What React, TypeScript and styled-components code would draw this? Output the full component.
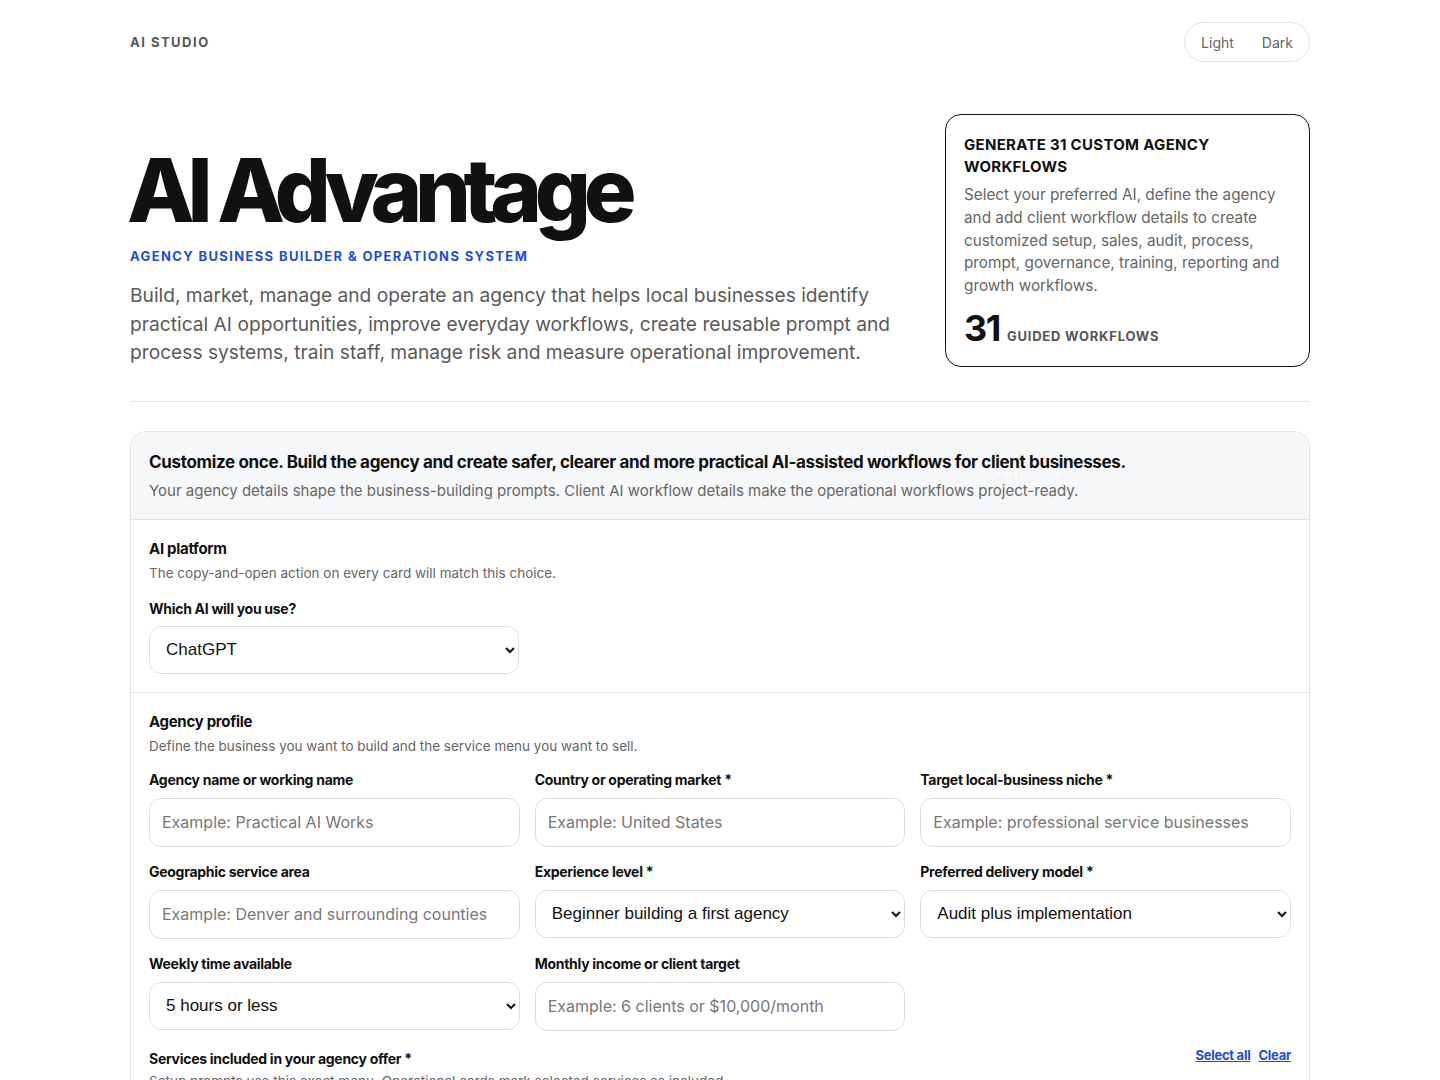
import React from "react";
import styled, { createGlobalStyle } from "styled-components";

const Global = createGlobalStyle`
  * { box-sizing: border-box; }
  html, body { margin: 0; padding: 0; background: #ffffff; }
  body { font-family: Inter, "Noto Sans", sans-serif; color: #111111; -webkit-font-smoothing: antialiased; }
`;

const Page = styled.div`
  width: 1180px;
  margin: 0 auto;
`;

const TopBar = styled.header`
  display: flex;
  align-items: center;
  justify-content: space-between;
  height: 84px;
`;

const Brand = styled.div`
  font-size: 13px;
  font-weight: 700;
  letter-spacing: 0.115em;
  color: #555;
`;

const Toggle = styled.div`
  display: flex;
  align-items: center;
  height: 40px;
  padding: 0 2px;
  border: 1px solid #e2e2e2;
  border-radius: 20px;
`;

const ToggleBtn = styled.button`
  border: 0;
  background: transparent;
  font-family: Inter, sans-serif;
  font-size: 14px;
  color: #666;
  padding: 0 14px;
  height: 32px;
  border-radius: 16px;
`;

const Hero = styled.section`
  display: grid;
  grid-template-columns: 1fr 365px;
  gap: 40px;
  align-items: start;
  padding-top: 30px;
  padding-bottom: 34px;
  border-bottom: 1px solid #e3e3e3;
`;

const HeroText = styled.div`
  padding-top: 28px;
`;

const Title = styled.h1`
  margin: 0 0 0 -3px;
  font-size: 88px;
  line-height: 96px;
  font-weight: 800;
  letter-spacing: -0.083em;
  color: #111;
`;

const Kicker = styled.div`
  margin-top: 10px;
  font-size: 13px;
  font-weight: 700;
  letter-spacing: 0.105em;
  color: #1d4ed8;
`;

const Lead = styled.p`
  margin: 17px 0 0;
  max-width: 790px;
  font-size: 19.2px;
  line-height: 28.5px;
  color: #5a5a5a;
`;

const StatCard = styled.aside`
  border: 1px solid #111;
  border-radius: 16px;
  padding: 19px 18px 18px;
`;

const StatTitle = styled.h2`
  margin: 0;
  font-size: 15px;
  line-height: 22px;
  font-weight: 700;
  letter-spacing: 0.02em;
  color: #111;
`;

const StatBody = styled.p`
  margin: 6px 0 0;
  font-size: 15.3px;
  line-height: 22.8px;
  color: #666;
`;

const StatRow = styled.div`
  display: flex;
  align-items: baseline;
  gap: 7px;
  margin-top: 10px;
`;

const StatNum = styled.span`
  font-size: 36px;
  font-weight: 700;
  letter-spacing: -0.04em;
  color: #111;
  line-height: 40px;
`;

const StatUnit = styled.span`
  font-size: 13px;
  font-weight: 700;
  letter-spacing: 0.06em;
  color: #555;
`;

const Panel = styled.section`
  margin-top: 29px;
  border: 1px solid #e3e3e3;
  border-radius: 16px;
  overflow: hidden;
`;

const PanelHead = styled.div`
  background: #f6f7f9;
  padding: 18px 18px 18px;
  border-bottom: 1px solid #e3e3e3;
`;

const PanelTitle = styled.h3`
  margin: 0;
  font-size: 17px;
  line-height: 24px;
  font-weight: 700;
  letter-spacing: -0.02em;
  color: #111;
`;

const PanelSub = styled.p`
  margin: 7px 0 0;
  font-size: 15px;
  line-height: 20px;
  color: #666;
`;

const Section = styled.div<{ $last?: boolean }>`
  padding: 19px 18px 18px;
  border-bottom: ${(p) => (p.$last ? "none" : "1px solid #e3e3e3")};
`;

const SectionTitle = styled.h4`
  margin: 0;
  font-size: 15px;
  line-height: 20px;
  font-weight: 700;
  letter-spacing: -0.02em;
  color: #111;
`;

const SectionDesc = styled.p`
  margin: 6px 0 0;
  font-size: 13.5px;
  line-height: 16px;
  color: #666;
`;

const Grid = styled.div`
  display: grid;
  grid-template-columns: repeat(3, 1fr);
  column-gap: 15px;
  row-gap: 16px;
  margin-top: 17px;
`;

const Field = styled.label`
  display: flex;
  flex-direction: column;
  gap: 10px;
`;

const SingleField = styled(Field)`
  width: 370px;
  margin-top: 19px;
  gap: 9px;
`;

const Label = styled.span`
  font-size: 14px;
  line-height: 17px;
  font-weight: 700;
  letter-spacing: -0.02em;
  color: #111;
`;

const Input = styled.input`
  height: 49px;
  width: 100%;
  border: 1px solid #dedede;
  border-radius: 12px;
  padding: 0 12px;
  font-family: Inter, sans-serif;
  font-size: 16px;
  color: #111;
  background: #fff;
  &::placeholder { color: #777; }
`;

const Select = styled.select`
  height: 48px;
  width: 100%;
  border: 1px solid #dedede;
  border-radius: 12px;
  padding: 0 12px;
  font-family: "Liberation Sans", Arial, sans-serif;
  font-size: 17px;
  color: #111;
  background: #fff;
`;

const ServicesRow = styled.div`
  display: flex;
  align-items: flex-start;
  justify-content: space-between;
  margin-top: 19px;
`;

const Links = styled.div`
  display: flex;
  gap: 8px;
  margin-top: -3px;
`;

const LinkBtn = styled.a`
  font-size: 13px;
  line-height: 16px;
  font-weight: 700;
  letter-spacing: -0.02em;
  color: #1d4ed8;
  text-decoration: underline;
  cursor: pointer;
`;

const ServicesDesc = styled(SectionDesc)`
  margin-top: 6px;
`;

export default function App() {
  return (
    <>
      <Global />
      <Page>
        <TopBar>
          <Brand>AI STUDIO</Brand>
          <Toggle>
            <ToggleBtn>Light</ToggleBtn>
            <ToggleBtn>Dark</ToggleBtn>
          </Toggle>
        </TopBar>

        <Hero>
          <HeroText>
            <Title>AI Advantage</Title>
            <Kicker>AGENCY BUSINESS BUILDER &amp; OPERATIONS SYSTEM</Kicker>
            <Lead>
              Build, market, manage and operate an agency that helps local businesses identify practical AI
              opportunities, improve everyday workflows, create reusable prompt and process systems, train staff,
              manage risk and measure operational improvement.
            </Lead>
          </HeroText>
          <StatCard>
            <StatTitle>GENERATE 31 CUSTOM AGENCY WORKFLOWS</StatTitle>
            <StatBody>
              Select your preferred AI, define the agency and add client workflow details to create customized
              setup, sales, audit, process, prompt, governance, training, reporting and growth workflows.
            </StatBody>
            <StatRow>
              <StatNum>31</StatNum>
              <StatUnit>GUIDED WORKFLOWS</StatUnit>
            </StatRow>
          </StatCard>
        </Hero>

        <Panel>
          <PanelHead>
            <PanelTitle>
              Customize once. Build the agency and create safer, clearer and more practical AI-assisted workflows
              for client businesses.
            </PanelTitle>
            <PanelSub>
              Your agency details shape the business-building prompts. Client AI workflow details make the
              operational workflows project-ready.
            </PanelSub>
          </PanelHead>

          <Section>
            <SectionTitle>AI platform</SectionTitle>
            <SectionDesc>The copy-and-open action on every card will match this choice.</SectionDesc>
            <SingleField>
              <Label>Which AI will you use?</Label>
              <Select defaultValue="ChatGPT">
                <option>ChatGPT</option>
                <option>Claude</option>
                <option>Gemini</option>
              </Select>
            </SingleField>
          </Section>

          <Section $last>
            <SectionTitle>Agency profile</SectionTitle>
            <SectionDesc>Define the business you want to build and the service menu you want to sell.</SectionDesc>
            <Grid>
              <Field>
                <Label>Agency name or working name</Label>
                <Input placeholder="Example: Practical AI Works" />
              </Field>
              <Field>
                <Label>Country or operating market *</Label>
                <Input placeholder="Example: United States" />
              </Field>
              <Field>
                <Label>Target local-business niche *</Label>
                <Input placeholder="Example: professional service businesses" />
              </Field>
              <Field>
                <Label>Geographic service area</Label>
                <Input placeholder="Example: Denver and surrounding counties" />
              </Field>
              <Field>
                <Label>Experience level *</Label>
                <Select defaultValue="Beginner building a first agency">
                  <option>Beginner building a first agency</option>
                  <option>Some consulting experience</option>
                </Select>
              </Field>
              <Field>
                <Label>Preferred delivery model *</Label>
                <Select defaultValue="Audit plus implementation">
                  <option>Audit plus implementation</option>
                  <option>Done-for-you</option>
                </Select>
              </Field>
              <Field>
                <Label>Weekly time available</Label>
                <Select defaultValue="5 hours or less">
                  <option>5 hours or less</option>
                  <option>10 hours</option>
                </Select>
              </Field>
              <Field>
                <Label>Monthly income or client target</Label>
                <Input placeholder="Example: 6 clients or $10,000/month" />
              </Field>
            </Grid>
            <ServicesRow>
              <Label>Services included in your agency offer *</Label>
              <Links>
                <LinkBtn>Select all</LinkBtn>
                <LinkBtn>Clear</LinkBtn>
              </Links>
            </ServicesRow>
            <ServicesDesc>
              Setup prompts use this exact menu. Operational cards mark selected services as included.
            </ServicesDesc>
          </Section>
        </Panel>
      </Page>
    </>
  );
}
